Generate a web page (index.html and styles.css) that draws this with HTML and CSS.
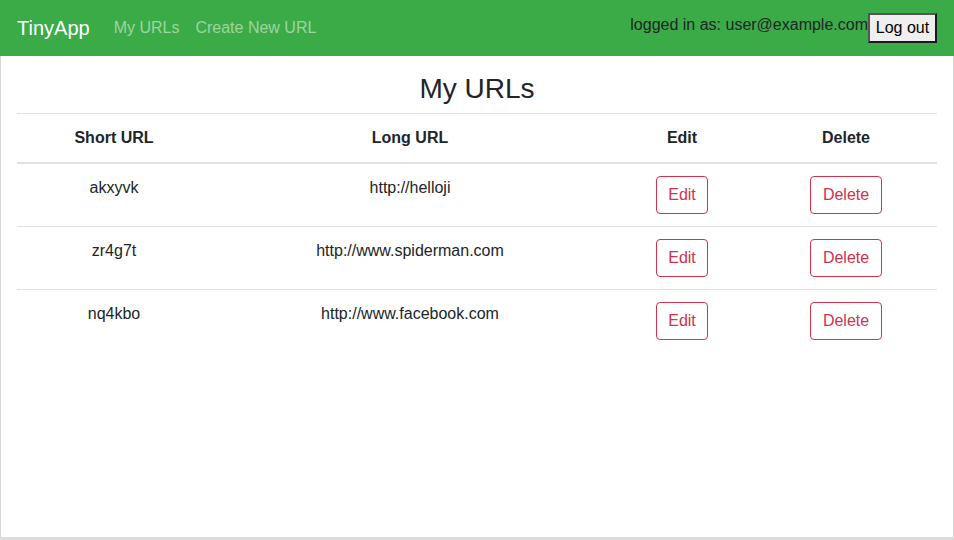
FILE: index.html
```html
<!DOCTYPE html>
<html lang="en">
<head>
<meta charset="utf-8">
<title>TinyApp</title>
<link rel="stylesheet" href="styles.css">
</head>
<body>
<nav class="navbar">
  <a class="brand" href="#">TinyApp</a>
  <div class="nav-links">
    <a class="nav-link" href="#">My URLs</a>
    <a class="nav-link" href="#">Create New URL</a>
  </div>
  <div class="nav-right">
    <span class="login-text">logged in as: user@example.com</span>
    <button class="logout" type="button">Log out</button>
  </div>
</nav>
<main class="main">
  <h3 class="title">My URLs</h3>
  <table class="url-table">
    <thead>
      <tr>
        <th class="c1">Short URL</th>
        <th class="c2">Long URL</th>
        <th class="c3">Edit</th>
        <th class="c4">Delete</th>
      </tr>
    </thead>
    <tbody>
      <tr>
        <td>akxyvk</td>
        <td>http://helloji</td>
        <td><button class="btn" type="button">Edit</button></td>
        <td><button class="btn" type="button">Delete</button></td>
      </tr>
      <tr>
        <td>zr4g7t</td>
        <td>http://www.spiderman.com</td>
        <td><button class="btn" type="button">Edit</button></td>
        <td><button class="btn" type="button">Delete</button></td>
      </tr>
      <tr class="last">
        <td>nq4kbo</td>
        <td>http://www.facebook.com</td>
        <td><button class="btn" type="button">Edit</button></td>
        <td><button class="btn" type="button">Delete</button></td>
      </tr>
    </tbody>
  </table>
</main>
</body>
</html>
```

FILE: styles.css
```css
* { box-sizing: border-box; }
html, body {
  margin: 0;
  padding: 0;
}
body {
  font-family: "Liberation Sans", Arial, sans-serif;
  font-size: 16px;
  line-height: 1.5;
  color: #212529;
  background: #dcdcdc;
  height: 540px;
  overflow: hidden;
}
.navbar {
  height: 56px;
  background: #3aab46;
  display: flex;
  align-items: center;
  padding: 0 17px 0 17px;
}
.brand {
  font-size: 20px;
  line-height: 30px;
  color: #fff;
  text-decoration: none;
  margin-right: 16px;
}
.nav-links {
  display: flex;
  flex: 1;
}
.nav-link {
  color: rgba(255, 255, 255, 0.5);
  text-decoration: none;
  padding: 8px 8px;
  font-size: 16px;
  line-height: 24px;
}
.nav-right {
  display: flex;
  align-items: center;
  margin-top: -2px;
}
.login-text {
  color: #212529;
  font-size: 16px;
  white-space: nowrap;
  position: relative;
  top: -2px;
}
.logout {
  font-family: "Liberation Sans", Arial, sans-serif;
  font-size: 16px;
  line-height: 21px;
  padding: 2px 0;
  height: 30px;
  width: 69px;
  white-space: nowrap;
  text-align: center;
  background: #efefef;
  color: #000;
  border: 2px solid;
  border-color: #555 #1a1a1a #1a1a1a #555;
  border-radius: 0;
  margin-top: 1px;
}
.main {
  background: #fff;
  height: 481px;
  border-left: 1px solid #d6d6d6;
  border-right: 1px solid #d6d6d6;
  padding: 16px 16px 0 16px;
}
.title {
  margin: 0 0 7px 0;
  font-size: 28px;
  font-weight: 400;
  line-height: 1.2;
  text-align: center;
}
.url-table {
  width: 100%;
  border-collapse: collapse;
  text-align: center;
}
.url-table th,
.url-table td {
  padding: 12px;
  border-top: 1px solid #dee2e6;
  vertical-align: top;
}
.url-table thead th {
  border-bottom: 2px solid #dee2e6;
  font-weight: 700;
}
.c1 { width: 194px; }
.c2 { width: 398px; }
.c3 { width: 146px; }
.c4 { width: 182px; }
.url-table td { line-height: 24px; }
.btn {
  font-family: "Liberation Sans", Arial, sans-serif;
  font-size: 16px;
  line-height: 24px;
  padding: 6px 11.5px;
  color: #d0334d;
  background: transparent;
  border: 1px solid #d0334d;
  border-radius: 4px;
  display: inline-block;
}
```
